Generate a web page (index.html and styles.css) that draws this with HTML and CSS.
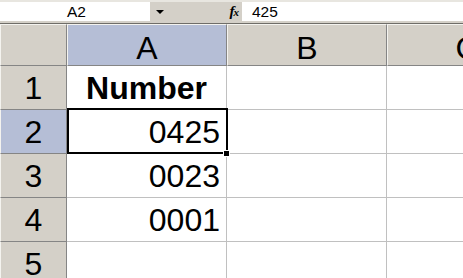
FILE: index.html
```html
<!DOCTYPE html>
<html>
<head>
<meta charset="utf-8">
<link rel="stylesheet" href="styles.css">
</head>
<body>
<div class="app">
  <div class="fbar">
    <div class="namebox">A2</div>
    <div class="dropbtn"><span class="tri"></span></div>
    <div class="fxbtn"><span class="fx">f<span class="x">x</span></span></div>
    <div class="finput">425</div>
  </div>
  <div class="sheet">
    <div class="corner"></div>
    <div class="ch sel">A</div>
    <div class="ch">B</div>
    <div class="ch">C</div>

    <div class="rh">1</div>
    <div class="cell hdr">Number</div>
    <div class="cell"></div>
    <div class="cell"></div>

    <div class="rh sel">2</div>
    <div class="cell num active">0425<span class="handle"></span></div>
    <div class="cell"></div>
    <div class="cell"></div>

    <div class="rh">3</div>
    <div class="cell num">0023</div>
    <div class="cell"></div>
    <div class="cell"></div>

    <div class="rh">4</div>
    <div class="cell num">0001</div>
    <div class="cell"></div>
    <div class="cell"></div>

    <div class="rh">5</div>
    <div class="cell"></div>
    <div class="cell"></div>
    <div class="cell"></div>
  </div>
</div>
</body>
</html>
```
FILE: styles.css
```css
html, body {
  margin: 0;
  padding: 0;
  background: #ffffff;
}
.app {
  width: 463px;
  height: 278px;
  overflow: hidden;
  font-family: "Liberation Sans", Arial, sans-serif;
  color: #000;
}
.fbar {
  height: 24px;
  box-sizing: border-box;
  background: #d4d0c8;
  border-top: 2px solid #e8e6e0;
  border-bottom: 1px solid #6f6d68;
  display: flex;
  align-items: stretch;
  padding-bottom: 2px;
}
.namebox {
  width: 150px;
  background: #fff;
  font-size: 15.5px;
  line-height: 19px;
  text-align: center;
  padding-left: 3px;
  box-sizing: border-box;
}
.dropbtn {
  width: 20px;
  display: flex;
  align-items: center;
  justify-content: center;
}
.tri {
  width: 0;
  height: 0;
  border-left: 4px solid transparent;
  border-right: 4px solid transparent;
  border-top: 4px solid #000;
}
.fxbtn {
  width: 72px;
  display: flex;
  align-items: center;
  justify-content: flex-end;
  padding-right: 4px;
  box-sizing: border-box;
}
.fx {
  font-family: "Liberation Serif", "Times New Roman", serif;
  font-style: italic;
  font-weight: bold;
  font-size: 15px;
  letter-spacing: -1px;
}
.fx .x {
  font-size: 11px;
}
.finput {
  flex: 1;
  background: #fff;
  font-size: 15.5px;
  line-height: 19px;
  padding-left: 10px;
}
.sheet {
  display: grid;
  grid-template-columns: 67px 160px 160px 160px;
  grid-template-rows: 42px 44px 44px 44px 44px 44px;
  font-size: 32px;
}
.corner, .ch, .rh {
  background: #d4d0c8;
  box-sizing: border-box;
  border-right: 1px solid #858585;
  border-bottom: 1px solid #858585;
  border-top: 1px solid #f4f3ef;
  border-left: 1px solid #f4f3ef;
  display: flex;
  align-items: center;
  justify-content: center;
  line-height: 1;
}
.ch {
  padding-top: 6px;
}
.rh {
  border-top: none;
}
.ch.sel, .rh.sel {
  background: #b5bed6;
}
.cell {
  position: relative;
  box-sizing: border-box;
  border-right: 1px solid #c0c0c0;
  border-bottom: 1px solid #c0c0c0;
  display: flex;
  align-items: center;
  line-height: 1;
  padding: 0 6px;
}
.cell.hdr {
  font-weight: bold;
  justify-content: center;
}
.cell.num {
  justify-content: flex-end;
}
.cell.active::after {
  content: "";
  position: absolute;
  left: 0;
  top: -2px;
  right: -2px;
  bottom: -1px;
  border: 2px solid #000;
}
.handle {
  position: absolute;
  right: -4px;
  bottom: -4px;
  width: 5px;
  height: 5px;
  background: #000;
  border: 1px solid #fff;
  z-index: 2;
}
```
